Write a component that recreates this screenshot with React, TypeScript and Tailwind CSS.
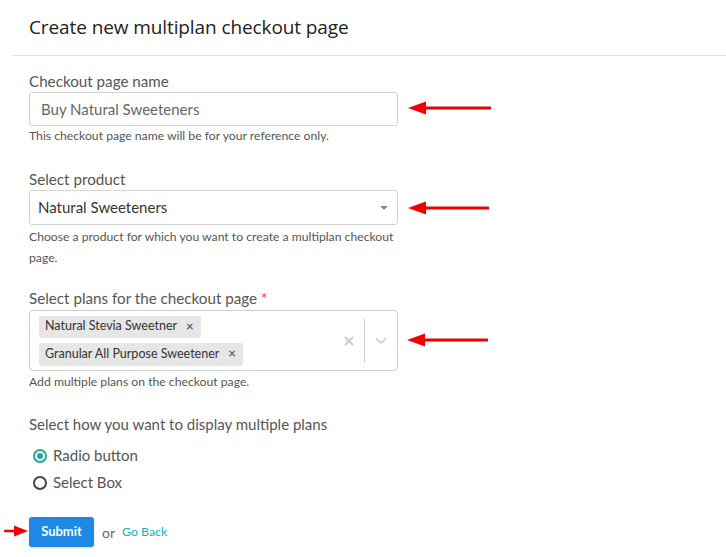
import React from "react";

const Arrow = ({ x, y, w }: { x: number; y: number; w: number }) => (
  <svg
    className="absolute"
    style={{ left: x, top: y - 8 }}
    width={w}
    height={16}
    viewBox={`0 0 ${w} 16`}
  >
    <polygon points={`0,8 18,1.5 18,14.5`} fill="#f00000" />
    <line x1={14} y1={8} x2={w - 1} y2={8} stroke="#f00000" strokeWidth={3} strokeLinecap="round" />
  </svg>
);

const ArrowRight = ({ x, y, w }: { x: number; y: number; w: number }) => (
  <svg
    className="absolute"
    style={{ left: x, top: y - 7 }}
    width={w}
    height={14}
    viewBox={`0 0 ${w} 14`}
  >
    <polygon points={`${w},7 ${w - 14},1.5 ${w - 14},12.5`} fill="#f00000" />
    <line x1={1} y1={7} x2={w - 10} y2={7} stroke="#f00000" strokeWidth={2.5} strokeLinecap="round" />
  </svg>
);

export default function App() {
  return (
    <div
      className="relative w-[726px] h-[557px] bg-white overflow-hidden"
      style={{ fontFamily: "Lato, 'Noto Sans', sans-serif" }}
    >
      <div className="ml-[12px] h-[56px] border-b border-[#e3e3e3] flex items-center pl-[17px]">
        <h1
          className="text-[19px] text-[#222] pb-[1px] tracking-[-0.1px]"
          style={{ fontFamily: "'Open Sans', Lato, sans-serif" }}
        >
          Create new multiplan checkout page
        </h1>
      </div>

      <div className="pl-[29px] w-[398px]">
        <div className="mt-[15px] text-[15.2px] leading-[20px] text-[#555]">Checkout page name</div>
        <div className="mt-[1px] h-[34px] border border-[#d4d4d4] rounded-[3px] flex items-center pl-[11px] text-[15px] text-[#666]">
          Buy Natural Sweeteners
        </div>
        <div className="text-[12.2px] leading-[20px] text-[#555]">
          This checkout page name will be for your reference only.
        </div>

        <div className="mt-[23px] text-[15.2px] leading-[20px] text-[#555]">Select product</div>
        <div className="mt-[1px] h-[35px] border border-[#d4d4d4] rounded-[3px] flex items-center pl-[8px] pr-[9px] text-[15px] text-[#333]">
          <span className="flex-1">Natural Sweeteners</span>
          <span className="w-0 h-0 border-l-[4px] border-r-[4px] border-t-[4px] border-l-transparent border-r-transparent border-t-[#888]" />
        </div>
        <div className="text-[12.2px] leading-[21px] text-[#555] mt-[1px]">
          Choose a product for which you want to create a multiplan checkout page.
        </div>

        <div className="mt-[20px] text-[15.2px] leading-[20px] text-[#555]">
          Select plans for the checkout page <span className="text-[#e53935]">*</span>
        </div>
        <div className="mt-[2px] h-[61px] border border-[#cfcfcf] rounded-[4px] flex items-center">
          <div className="flex-1 flex flex-col items-start gap-[5px] pl-[9px]">
            <div className="h-[22px] bg-[#e6e6e6] rounded-[2px] flex items-center pl-[6px] pr-[7px] text-[12.5px] text-[#333]">
              <span>Natural Stevia Sweetner</span>
              <span className="ml-[9px] text-[#666] text-[13px] font-bold">×</span>
            </div>
            <div className="h-[23px] bg-[#e6e6e6] rounded-[2px] flex items-center pl-[6px] pr-[7px] text-[12.5px] text-[#333]">
              <span>Granular All Purpose Sweetener</span>
              <span className="ml-[9px] text-[#666] text-[13px] font-bold">×</span>
            </div>
          </div>
          <div className="w-[30px] flex justify-center">
            <svg width="10" height="10" viewBox="0 0 10 10">
              <path d="M1 1L9 9M9 1L1 9" stroke="#c8c8c8" strokeWidth="1.8" />
            </svg>
          </div>
          <div className="w-px h-[44px] bg-[#d0d0d0]" />
          <div className="w-[32px] flex justify-center">
            <svg width="12" height="8" viewBox="0 0 12 8">
              <path d="M1 1.5L6 6L11 1.5" stroke="#c8c8c8" strokeWidth="1.6" fill="none" />
            </svg>
          </div>
        </div>
        <div className="text-[12.2px] leading-[20px] text-[#555] mt-[1px]">
          Add multiple plans on the checkout page.
        </div>

        <div className="mt-[22px] text-[15px] leading-[20px] text-[#555]">
          Select how you want to display multiple plans
        </div>
        <div className="mt-[8px] flex items-center h-[27px] pl-[4px]">
          <span className="w-[14px] h-[14px] rounded-full border-[2px] border-[#26a69a] flex items-center justify-center">
            <span className="w-[6px] h-[6px] rounded-full bg-[#26a69a]" />
          </span>
          <span className="ml-[6px] text-[15px] text-[#555]">Radio button</span>
        </div>
        <div className="flex items-center h-[27px] pl-[4px]">
          <span className="w-[14px] h-[14px] rounded-full border-[2px] border-[#444]" />
          <span className="ml-[6px] text-[15px] text-[#555]">Select Box</span>
        </div>

        <div className="mt-[21px] flex items-center">
          <button className="w-[65px] h-[30px] rounded-[3px] bg-[#1e88e5] text-white text-[13px] font-bold shadow-[0_1px_2px_rgba(0,0,0,0.15)]">
            Submit
          </button>
          <span className="ml-[8px] text-[14px] text-[#666]">or</span>
          <span className="ml-[7px] text-[12.3px] text-[#17aebf]">Go Back</span>
        </div>
      </div>

      <Arrow x={408} y={108} w={83} />
      <Arrow x={408} y={208} w={81} />
      <Arrow x={407} y={340} w={81} />
      <ArrowRight x={4} y={531} w={24} />
    </div>
  );
}
